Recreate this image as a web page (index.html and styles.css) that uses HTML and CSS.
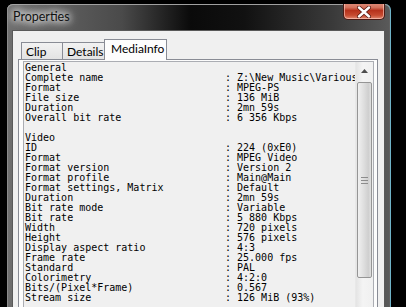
FILE: index.html
```html
<!DOCTYPE html>
<html lang="en">
<head>
  <meta charset="UTF-8">
  <title>Properties</title>
  <link rel="stylesheet" href="styles.css">
</head>
<body>
<div class="window">
  <div class="titlebar">
    <span class="title">Properties</span>
    <div class="close-btn">
      <svg width="16" height="12" viewBox="0 0 16 12">
        <path d="M3 1.5 L13 10.5 M13 1.5 L3 10.5" stroke="#5a1a12" stroke-width="4" stroke-linecap="round"/>
        <path d="M3 1.5 L13 10.5 M13 1.5 L3 10.5" stroke="#fff" stroke-width="2.4" stroke-linecap="round"/>
      </svg>
    </div>
  </div>

  <div class="client">
    <div class="tabs">
      <div class="tab">Clip</div>
      <div class="tab">Details</div>
      <div class="tab active">MediaInfo</div>
    </div>
    <div class="panel">
      <div class="listbox">
        <div class="info">
          <div class="row">General</div>
          <div class="row"><span class="k">Complete name</span><span class="v">: Z:\New Music\Various Artists\clip.mpg</span></div>
          <div class="row"><span class="k">Format</span><span class="v">: MPEG-PS</span></div>
          <div class="row"><span class="k">File size</span><span class="v">: 136 MiB</span></div>
          <div class="row"><span class="k">Duration</span><span class="v">: 2mn 59s</span></div>
          <div class="row"><span class="k">Overall bit rate</span><span class="v">: 6 356 Kbps</span></div>
          <div class="row">&nbsp;</div>
          <div class="row">Video</div>
          <div class="row"><span class="k">ID</span><span class="v">: 224 (0xE0)</span></div>
          <div class="row"><span class="k">Format</span><span class="v">: MPEG Video</span></div>
          <div class="row"><span class="k">Format version</span><span class="v">: Version 2</span></div>
          <div class="row"><span class="k">Format profile</span><span class="v">: Main@Main</span></div>
          <div class="row"><span class="k">Format settings, Matrix</span><span class="v">: Default</span></div>
          <div class="row"><span class="k">Duration</span><span class="v">: 2mn 59s</span></div>
          <div class="row"><span class="k">Bit rate mode</span><span class="v">: Variable</span></div>
          <div class="row"><span class="k">Bit rate</span><span class="v">: 5 880 Kbps</span></div>
          <div class="row"><span class="k">Width</span><span class="v">: 720 pixels</span></div>
          <div class="row"><span class="k">Height</span><span class="v">: 576 pixels</span></div>
          <div class="row"><span class="k">Display aspect ratio</span><span class="v">: 4:3</span></div>
          <div class="row"><span class="k">Frame rate</span><span class="v">: 25.000 fps</span></div>
          <div class="row"><span class="k">Standard</span><span class="v">: PAL</span></div>
          <div class="row"><span class="k">Colorimetry</span><span class="v">: 4:2:0</span></div>
          <div class="row"><span class="k">Bits/(Pixel*Frame)</span><span class="v">: 0.567</span></div>
          <div class="row"><span class="k">Stream size</span><span class="v">: 126 MiB (93%)</span></div>
        </div>
        <div class="scrollbar">
          <div class="arrow">
            <svg width="7" height="4" viewBox="0 0 7 4"><path d="M0 4 L3.5 0 L7 4 Z" fill="#4d4d4d"/></svg>
          </div>
          <div class="thumb">
            <div class="grip"></div>
          </div>
        </div>
      </div>
    </div>
  </div>
</div>
</body>
</html>
```

FILE: styles.css
```css
body {
  margin: 0;
  background-color: black;
  overflow: hidden;
  height: 307px;
}
.window {
  margin: 4px 0 0 7px;
  width: 384px;
  height: 303px;
  overflow: hidden;
  border-radius: 6px 6px 0 0;
  background: linear-gradient(to right, #6f6f6f 0%, #4a4a4a 30%, #0a0a0a 48%, #111 62%, #3a3a3a 85%, #5a5a5a 100%);
  box-shadow: inset 0 1px 0 #a0a0a0, inset 1px 0 0 #8a8a8a, inset -1px 0 0 #606060;
  border-right: 1px solid #6fb3c8;
  box-sizing: border-box;
  display: flex;
  flex-direction: column;
}
.titlebar {
  height: 26px;
  flex-shrink: 0;
  display: flex;
  justify-content: space-between;
  align-items: flex-start;
  padding-left: 6px;
  padding-right: 5px;
}
.title {
  font-family: Lato, "Noto Sans", sans-serif;
  font-size: 12.5px;
  color: #111;
  margin-top: 5px;
  padding: 0 8px 0 0;
  text-shadow: 0 0 6px #fff, 0 0 10px #fff, 0 0 12px #eee;
}
.close-btn {
  margin-top: -4px;
  width: 42px;
  height: 20px;
  border: 1px solid #4a1a14;
  border-top: none;
  border-radius: 0 0 5px 5px;
  background: linear-gradient(to bottom, #e8a595 0%, #d2705a 40%, #b6321c 55%, #c64a30 80%, #e08870 100%);
  box-shadow: inset 0 0 0 1px rgba(255, 210, 200, 0.6);
  display: flex;
  align-items: center;
  justify-content: center;
  box-sizing: border-box;
  padding-top: 4px;
}
.client {
  flex: 1;
  margin: 0 5px 0 5px;
  background-color: #f0f0f0;
  border: 1px solid #5a5a5a;
  border-bottom: none;
  padding: 7px 6px 0 5px;
}
.tabs {
  display: flex;
  align-items: flex-end;
  height: 21px;
  padding-left: 3px;
  position: relative;
  z-index: 1;
}
.tab {
  font-family: Lato, "Noto Sans", sans-serif;
  font-size: 12px;
  color: #000;
  height: 17px;
  line-height: 18px;
  padding: 0 4px;
  border: 1px solid #898c95;
  border-bottom: none;
  margin-right: -1px;
  background: linear-gradient(to bottom, #f2f2f2, #e3e3e3);
  box-sizing: border-box;
}
.tab:first-child {
  width: 42px;
}
.tab:nth-child(2) {
  width: 43px;
}
.tab.active {
  height: 21px;
  line-height: 18px;
  width: 63px;
  padding: 0 6px;
  background: #fdfdfd;
  margin-bottom: -1px;
  margin-right: 0;
}
.panel {
  background: #fcfcfc;
  border: 1px solid #898c95;
  border-bottom: none;
  height: 260px;
  padding: 1px 3px 0 4px;
}
.listbox {
  display: flex;
  border: 1px solid #abadb3;
  border-bottom: none;
  background: #f0f0f0;
  height: 259px;
}
.info {
  flex: 1;
  overflow: hidden;
  padding: 1px 0 0 1px;
  font-family: "DejaVu Sans Mono", monospace;
  font-size: 10px;
  line-height: 10px;
  color: #000;
  white-space: nowrap;
}
.row {
  display: flex;
  height: 10px;
}
.k {
  width: 200px;
  flex-shrink: 0;
}
.scrollbar {
  width: 17px;
  background: linear-gradient(to right, #e4e4e4, #f4f4f4 40%, #f0f0f0);
  border-left: 1px solid #e8e8e8;
}
.arrow {
  height: 17px;
  display: flex;
  align-items: center;
  justify-content: center;
}
.thumb {
  margin: 3px 1px 0 1px;
  height: 194px;
  border: 1px solid #959595;
  border-radius: 2px;
  background: linear-gradient(to right, #f0f0f0, #dcdcdc 50%, #cfcfcf 80%, #e0e0e0);
  display: flex;
  align-items: center;
  justify-content: center;
}
.grip {
  width: 7px;
  height: 5px;
  border-top: 1px solid #8c8c8c;
  border-bottom: 1px solid #8c8c8c;
  background: linear-gradient(to bottom, transparent 2px, #8c8c8c 2px, #8c8c8c 3px, transparent 3px);
}
```
